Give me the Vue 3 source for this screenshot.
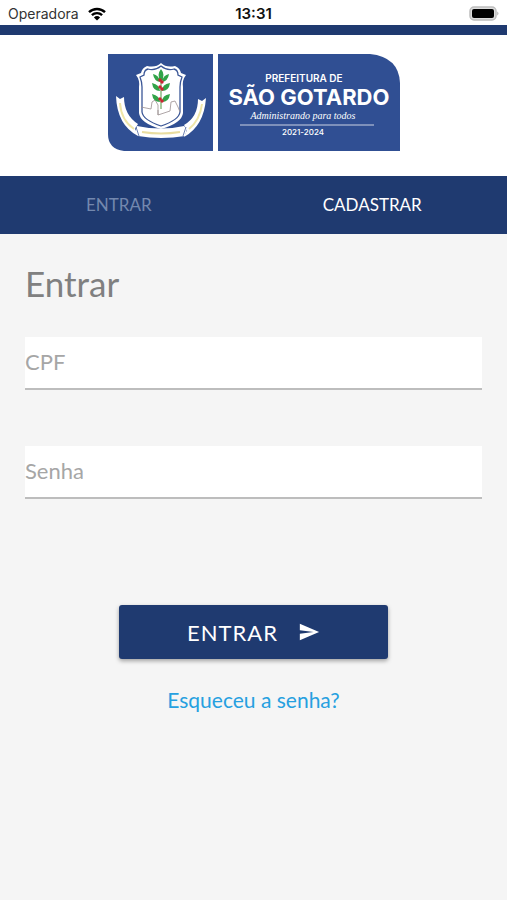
<script setup>
import { ref } from 'vue'

const cpf = ref('')
const senha = ref('')
</script>

<template>
  <div class="screen">
    <div class="status">
      <span class="carrier">
        Operadora
        <svg class="wifi" viewBox="0 0 18 14" aria-hidden="true">
          <path d="M1 5.2a11.5 11.5 0 0 1 16 0" />
          <path d="M3.9 8.2a7.4 7.4 0 0 1 10.2 0" />
          <path class="dot" d="M9 13.6 5.9 10.5a4.5 4.5 0 0 1 6.2 0z" />
        </svg>
      </span>
      <span class="clock">13:31</span>
      <svg class="battery" viewBox="0 0 30 15" aria-hidden="true">
        <rect x="1" y="1" width="26" height="13" rx="4" fill="#ddd" stroke="#bdbdbd" stroke-width="1.5" />
        <rect x="3" y="3" width="22" height="9" rx="2" fill="#000" />
        <path d="M28.3 5.5a2.4 2.4 0 0 1 0 4z" fill="#aaa" />
      </svg>
    </div>

    <header class="brand">
      <svg class="logo" viewBox="0 0 292 98" role="img" aria-label="Prefeitura de São Gotardo">
        <path d="M0 1h105v97H16Q0 96 0 81z" fill="#304f93" />
        <path d="M110 1h152q29 3 30 29v68H110z" fill="#304f93" />
        <path d="M8 43l4 3 4-2q0 18 14 27l-3 5 3 7Q9 72 8 43z" fill="#fff" />
        <path d="M98 45l-4 3-4-2q0 18-14 26l3 5-3 7q20-11 22-39z" fill="#fff" />
        <path d="M12 50q1 17 14 26M94 51q-2 16-13 25" fill="none" stroke="#efe6a8" stroke-width="2" />
        <path d="M53 10q5 5 14 3 5 2 6 7l5 2q-4 5-3 12v26q-1 10-22 16-21-6-22-16V34q1-7-3-12l5-2q1-5 6-7 9 2 14-3z" fill="#fff" />
        <path d="M53 13q6 5 13 3 4 1 4 6l4 2q-2 5-2 10v25q-1 8-19 14-18-6-19-14V34q0-5-2-10l4-2q0-5 4-6 7 2 13-3z" fill="#fff" stroke="#3b5797" stroke-width="1.3" />
        <path d="M33 54l10 2 1-7 3-2 3 5v10l12-4 1-9 4-1 3 6 2 5M50 62v-5" fill="none" stroke="#9b8f91" stroke-width=".8" />
        <path d="M53 20v36" stroke="#4e9541" stroke-width="1" />
        <g fill="#31a449">
          <path d="M53 29q-5-7 0-13 5 6 0 13zM52 29q-6-1-7-8 6 1 7 8zM54 29q1-7 7-8-1 7-7 8z" />
          <path d="M52 38q-7 0-8-8 8 2 8 8zM54 38q0-7 8-8-1 8-8 8z" />
          <path d="M52 49q-7 0-8-8 8 2 8 8zM54 49q0-7 8-8-1 8-8 8z" />
        </g>
        <g fill="#cb2432">
          <circle cx="52" cy="27" r="1.7" /><circle cx="54" cy="29" r="1.7" />
          <circle cx="52" cy="34" r="1.7" /><circle cx="54" cy="36" r="1.7" />
          <circle cx="52" cy="46" r="1.7" /><circle cx="54" cy="48" r="1.7" />
        </g>
        <path d="M29 73q24 5 47 0l3 3-2 7q-24 4-47 0l-3-4z" fill="#fff" />
        <path d="M28 74l3 9M78 74l-3 9" stroke="#304f93" stroke-width=".7" />
        <path d="M34 79q19 3 38 0" fill="none" stroke="#e9dda0" stroke-width="2" />
        <g fill="#fff" text-anchor="middle">
          <text class="logo-small" x="196" y="29">PREFEITURA DE</text>
          <text class="logo-name" x="201" y="52">SÃO GOTARDO</text>
          <text class="logo-script" x="195" y="66">Administrando para todos</text>
          <text class="logo-year" x="195" y="82">2021-2024</text>
        </g>
        <path d="M132 72h134" stroke="#fff" stroke-width="1" opacity=".75" />
      </svg>
    </header>

    <nav class="tabs">
      <a class="tab current" href="#entrar" aria-current="page">ENTRAR</a>
      <a class="tab" href="#cadastrar">CADASTRAR</a>
    </nav>

    <main class="content">
      <h1>Entrar</h1>
      <form @submit.prevent>
        <input v-model="cpf" class="field" type="text" inputmode="numeric" placeholder="CPF" aria-label="CPF" />
        <input v-model="senha" class="field" type="password" placeholder="Senha" aria-label="Senha" />
        <button class="submit" type="submit">
          ENTRAR
          <svg viewBox="0 0 24 24" aria-hidden="true">
            <path d="M2 21 23 12 2 3v7l15 2-15 2z" fill="currentColor" />
          </svg>
        </button>
      </form>
      <a class="forgot" href="#senha">Esqueceu a senha?</a>
    </main>
  </div>
</template>

<style>
body {
  background: #f5f5f5;
}
</style>

<style scoped>
.screen {
  min-height: 100vh;
  background: #f5f5f5;
  font-family: Lato, sans-serif;
}

.status {
  display: grid;
  grid-template-columns: 1fr auto 1fr;
  align-items: center;
  height: 25px;
  padding: 2px 8px 0;
  box-sizing: border-box;
  background: #fff;
  color: #111;
  font: 15px/20px Inter, sans-serif;
}

.carrier {
  display: flex;
  align-items: center;
  gap: 5px;
  color: #333;
  font-size: 14px;
}

.wifi {
  width: 18px;
  height: 14px;
  margin-left: 4px;
  fill: none;
  stroke: #000;
  stroke-width: 2.4;
}

.wifi .dot {
  fill: #000;
  stroke: none;
}

.clock {
  font-weight: 600;
}

.battery {
  width: 30px;
  height: 15px;
  justify-self: end;
}

.brand {
  display: flex;
  justify-content: center;
  padding: 18px 0 25px;
  border-top: 10px solid #1f3a70;
  background: #fff;
}

.logo {
  display: block;
  width: 292px;
  height: 98px;
}

.logo-small {
  font: 600 10px Inter, sans-serif;
}

.logo-name {
  font: 700 22px Inter, sans-serif;
}

.logo-script {
  font: italic 10px "Liberation Serif", serif;
}

.logo-year {
  font: 500 8px Inter, sans-serif;
}

.tabs {
  display: grid;
  grid-template-columns: 1fr 1fr;
  background: #1f3a70;
}

.tab {
  padding-right: 16px;
  color: #fff;
  font-size: 17px;
  line-height: 58px;
  text-align: center;
  text-decoration: none;
}

.current {
  color: #7388ae;
}

.content {
  display: flex;
  flex-direction: column;
  padding: 28px 25px;
}

h1 {
  margin: 0 0 33px;
  color: #808080;
  font-size: 35px;
  font-weight: 400;
  line-height: 42px;
}

form {
  display: flex;
  flex-direction: column;
}

.field {
  width: 100%;
  height: 53px;
  margin: 0 0 56px;
  padding: 0 0 2px;
  box-sizing: border-box;
  border: 0;
  border-bottom: 2px solid #bdbdbd;
  border-radius: 0;
  outline: 0;
  background: #fff;
  color: #444;
  font: 22px Lato, sans-serif;
}

.field::placeholder {
  color: #a6a6a6;
  opacity: 1;
}

.submit {
  display: flex;
  align-items: center;
  justify-content: center;
  gap: 20px;
  align-self: center;
  width: 269px;
  height: 54px;
  margin-top: 50px;
  padding: 0;
  border: 0;
  border-radius: 3px;
  background: #1f3a70;
  box-shadow: 0 2px 4px rgba(0, 0, 0, 0.35);
  color: #fff;
  font: 22px Lato, sans-serif;
  letter-spacing: 1px;
}

.submit svg {
  width: 22px;
  height: 22px;
}

.forgot {
  align-self: center;
  margin-top: 26px;
  color: #26a0e0;
  font-size: 21px;
  line-height: 30px;
  text-decoration: none;
}
</style>
